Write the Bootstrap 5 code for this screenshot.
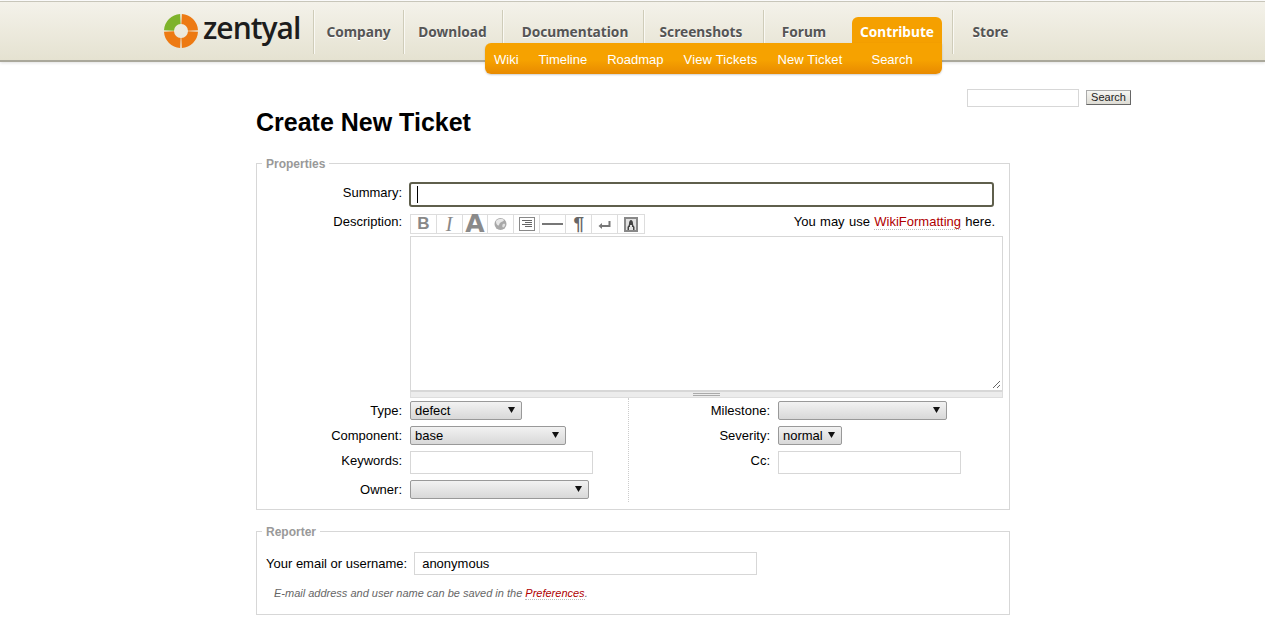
<!DOCTYPE html>
<html lang="en">
<head>
    <meta charset="UTF-8">
    <meta name="viewport" content="width=device-width, initial-scale=1.0">
    <title>Create New Ticket</title>

    <link href="https://cdn.jsdelivr.net/npm/bootstrap@5.3.0/dist/css/bootstrap.min.css" rel="stylesheet">
    <style>
        body { font-family: "Liberation Sans", Arial, sans-serif; font-size: 13px; line-height: 15px; color: #000; background: #fff; }

        /* header */
        .site-head { position: relative; height: 61px; margin-top: 1px; background: linear-gradient(#f4f2ea, #e5e2d1); border-top: 1px solid #c8c6ba; border-bottom: 2px solid #aaa89b; box-shadow: 0 1px 3px rgba(0,0,0,.12); }
        .head-inner { padding-left: 164px; height: 100%; }
        .logo-box { width: 149px; height: 34px; margin-top: 12px; gap: 5px; }
        .logo-word { font-family: "Open Sans", sans-serif; font-weight: 600; font-size: 30px; line-height: 34px; letter-spacing: -1px; color: #1d1d1d; margin-top: -3px; }
        .main-nav { margin-top: 8px; }
        .main-nav .nav-link { display: block; height: 44px; padding: 12px 0 0; text-align: center; font-family: "Noto Sans", sans-serif; font-weight: 700; font-size: 13.7px; line-height: 20px; color: #555; text-shadow: 0 1px 0 #fff; border-left: 1px solid #cfccb9; box-shadow: inset 1px 0 0 #faf9f4; }
        .main-nav .nw-company { width: 90px; }
        .main-nav .nw-download { width: 99px; padding-right: 1px; }
        .main-nav .nw-docs { width: 141px; padding-left: 4px; }
        .main-nav .nw-shots { width: 120px; padding-right: 5px; }
        .main-nav .nw-forum { width: 89px; padding-right: 8px; }
        .main-nav .nw-store { width: 77px; margin-left: 10px; padding-right: 1px; }
        .main-nav .nw-contrib { width: 90px; height: 28px; margin-top: 7px; padding-top: 5px; color: #fff; text-shadow: none; background: #f5a000; border: 0; box-shadow: none; border-radius: 6px 6px 0 0; }
        .sub-menu { position: absolute; left: 485px; top: 41px; width: 457px; height: 31px; padding-left: 9px; background: linear-gradient(#f6a200 55%, #e88a00); border-radius: 0 0 6px 6px; border-top-left-radius: 6px; box-shadow: 0 1px 2px rgba(0,0,0,.2); gap: 20px; }
        .sub-menu a { color: #fff; text-decoration: none; padding-top: 1px; line-height: 32px; white-space: nowrap; }
        .sub-menu .sub-wide { letter-spacing: .15px; }
        .sub-menu a:last-child { margin-left: 9px; }

        /* page */
        .page-wrap { margin-left: 256px; width: 875px; }
        .search-row { margin-top: 27px; height: 18px; }
        .search-input { width: 112px; height: 18px; border: 1px solid #d7d7d7; background: #fff; padding: 0 2px; }
        .search-btn { width: 45px; height: 15px; margin: 1px 0 0 7px; padding: 0 0 1px; font-size: 11px; line-height: 11px; color: #222; background: linear-gradient(#f6f6f3, #dedcd4); border: 1px solid #aaa; border-right-color: #666; border-bottom-color: #666; border-radius: 0; }
        .page-title { margin: 0; font-family: "Liberation Sans", Arial, sans-serif; font-weight: 700; font-size: 25px; line-height: 30px; height: 30px; color: #000; }

        fieldset.form-box { width: 754px; border: 1px solid #d7d7d7; padding: 0; min-width: 0; }
        .form-box legend { float: none; width: auto; margin: 0 0 0 5px; padding: 2px 4px 0; font-size: 12px; font-weight: 700; line-height: 14px; color: #999; }
        .props-box { margin-top: 18px; }
        .rep-box { margin-top: 13px; }

        .summary-row { position: relative; padding-top: 11px; }
        .desc-row { margin-top: 7px; }
        .field-label { width: 145px; text-align: right; flex: none; margin-right: 8px; }
        .label-summary { padding-top: 3px; }
        .label-input { padding-top: 2px; }
        .col-right .field-label { width: 141px; }
        .col-left { width: 372px; padding-top: 3px; height: 104px; border-right: 1px dotted #ccc; }
        .col-right { width: 372px; padding-top: 3px; }
        .gap-row { gap: 6px; }
        .prop-rows { padding-bottom: 7px; }

        .text-field { height: 23px; width: 183px; border: 1px solid #d7d7d7; background: #fff; padding: 0 7px; font: inherit; outline: 0; }
        .summary-input { display: block; width: 585px; height: 25px; margin-left: -1px; border: 2px solid #5f5f4c; border-radius: 3px; padding: 0 6px; font: inherit; background: #fff; outline: 0; caret-color: transparent; }
        .fake-caret { position: absolute; left: 160px; top: 15px; width: 1px; height: 17px; background: #000; }
        .select-box { appearance: none; -webkit-appearance: none; height: 19px; padding: 0 4px; font: inherit; line-height: 17px; color: #000; border: 1px solid #999; border-radius: 2px; background: url("data:image/svg+xml,%3Csvg xmlns='http://www.w3.org/2000/svg' width='7' height='6'%3E%3Cpath d='M0 0h7L3.5 6z' fill='%23111'/%3E%3C/svg%3E") no-repeat right 6px top 5px, linear-gradient(#f2f2f2, #d8d8d8); outline: 0; }
        .sw-type { width: 112px; }
        .sw-comp { width: 156px; }
        .sw-owner { width: 179px; }
        .sw-mile { width: 169px; }
        .sw-sev { width: 64px; }

        .trac-link { color: #b00000; text-decoration: none; border-bottom: 1px dotted #bbb; }

        /* wiki toolbar */
        .tool-line { width: 585px; height: 22px; }
        .tool-hint { word-spacing: .75px; }
        .wiki-bar { height: 20px; width: 235px; border: 1px solid #ddd; background: #fff; }
        .wiki-btn { width: 26px; height: 18px; border-right: 1px solid #ddd; color: #888; line-height: 18px; text-align: center; }
        .wiki-btn:last-child { border-right: 0; }
        .wiki-btn svg { display: block; }
        .wb-bold { font-size: 17px; font-weight: 700; }
        .wb-ital { font-family: "Liberation Serif", serif; font-style: italic; font-size: 20px; }
        .wb-big { font-family: "DejaVu Sans", sans-serif; font-size: 25px; font-weight: 700; color: #8a8a8a; line-height: 17px; }
        .wb-para { font-size: 19px; font-weight: 700; color: #666; }
        .edit-area { width: 593px; height: 155px; border: 1px solid #d7d7d7; position: relative; background: #fff; }
        .drag-bar { width: 593px; height: 7px; background: #ececec; border: 1px solid #ddd; border-top-color: #d7d7d7; position: relative; }
        .drag-bar span { position: absolute; left: 282px; top: 1px; width: 27px; height: 3px; border-top: 1px solid #aaa; border-bottom: 1px solid #aaa; }
        .resize-corner { position: absolute; right: 1px; bottom: 1px; }

        .reporter-row { padding: 13px 0 0 9px; }
        .reporter-label { margin-right: 7px; }
        .reporter-row .text-field { width: 343px; }
        .hint-note { margin: 11px 0 14px 17px; font-size: 11px; line-height: 14px; font-style: italic; color: #666; }
    </style>
</head>
<body>

    <!-- Site header -->
    <header class="site-head">
        <div class="head-inner d-flex">
            <a href="#" class="logo-box d-flex text-decoration-none">
                <svg width="34" height="34" viewBox="0 0 34 34" class="flex-shrink-0">
                    <g fill="none" stroke-width="10">
                        <path d="M5 16.400A12 12 0 0 1 16.400 5" stroke="#7eb32b"/>
                        <path d="M17.600 5A12 12 0 0 1 29 16.400" stroke="#ed7a13"/>
                        <path d="M29 17.600A12 12 0 0 1 17.600 29" stroke="#ed7a13"/>
                        <path d="M16.400 29A12 12 0 0 1 5 17.600" stroke="#ed7a13"/>
                    </g>
                </svg>
                <span class="logo-word">zentyal</span>
            </a>
            <ul class="nav main-nav flex-nowrap align-items-start">
                <li class="nav-item"><a class="nav-link nw-company" href="#">Company</a></li>
                <li class="nav-item"><a class="nav-link nw-download" href="#">Download</a></li>
                <li class="nav-item"><a class="nav-link nw-docs" href="#">Documentation</a></li>
                <li class="nav-item"><a class="nav-link nw-shots" href="#">Screenshots</a></li>
                <li class="nav-item"><a class="nav-link nw-forum" href="#">Forum</a></li>
                <li class="nav-item"><a class="nav-link nw-contrib" href="#">Contribute</a></li>
                <li class="nav-item"><a class="nav-link nw-store" href="#">Store</a></li>
            </ul>
        </div>
        <div class="sub-menu d-flex">
            <a href="#">Wiki</a>
            <a href="#">Timeline</a>
            <a href="#">Roadmap</a>
            <a href="#" class="sub-wide">View Tickets</a>
            <a href="#" class="sub-wide">New Ticket</a>
            <a href="#">Search</a>
        </div>
    </header>

    <div class="page-wrap">
        <form class="search-row d-flex justify-content-end">
            <input type="text" class="search-input" aria-label="Search">
            <button type="button" class="search-btn">Search</button>
        </form>

        <h1 class="page-title">Create New Ticket</h1>

        <fieldset class="form-box props-box">
            <legend>Properties</legend>

            <div class="d-flex summary-row">
                <label class="field-label label-summary">Summary:</label>
                <input type="text" class="summary-input" autofocus>
                <span class="fake-caret"></span>
            </div>

            <div class="d-flex desc-row">
                <label class="field-label">Description:</label>
                <div>
                    <div class="d-flex justify-content-between tool-line">
                        <div class="wiki-bar d-flex">
                            <div class="wiki-btn wb-bold">B</div>
                            <div class="wiki-btn wb-ital">I</div>
                            <div class="wiki-btn wb-big">A</div>
                            <div class="wiki-btn">
                                <svg width="25" height="18" viewBox="0 0 25 18"><circle cx="12.500" cy="9" r="6" fill="#a8a8a8"/><path d="M8 6c2-2.500 6-3 7.500-1.500s-1.500 2-3 3-1 3.500-2.500 3-2-2.500-2-4.500z" fill="#e8e8e8"/><path d="M15 9c1.500-.5 2.500 0 2 1.500s-2 2.500-2.500 1.500 0-2.500.5-3z" fill="#e0e0e0"/></svg>
                            </div>
                            <div class="wiki-btn">
                                <svg width="25" height="18" viewBox="0 0 25 18" fill="none" stroke="#666"><rect x="5.500" y="2.500" width="15" height="13" stroke="#888"/><path d="M8 5.500h10M11 7.500h7M8 9.500h10M11 11.500h7"/></svg>
                            </div>
                            <div class="wiki-btn">
                                <svg width="25" height="18" viewBox="0 0 25 18"><path d="M2 9h21" stroke="#777" stroke-width="2"/></svg>
                            </div>
                            <div class="wiki-btn wb-para">¶</div>
                            <div class="wiki-btn">
                                <svg width="25" height="18" viewBox="0 0 25 18" fill="none"><path d="M17.500 6v5h-8" stroke="#777" stroke-width="2"/><path d="M10 8v6l-3.500-3z" fill="#777"/></svg>
                            </div>
                            <div class="wiki-btn">
                                <svg width="25" height="18" viewBox="0 0 25 18"><rect x="6" y="2" width="14" height="15" fill="#888"/><rect x="8" y="4" width="10" height="11" fill="#e2e2e2"/><path d="M9.500 15v-3c.5-1 1.500-1.500 1.500-3.500S12 5 13 5s2 1.500 2 3.500 1 2.500 1.500 3.500v3h-1.500v-3h-1v-2h-2v2h-1v3z" fill="#444"/></svg>
                            </div>
                        </div>
                        <div class="tool-hint">You may use <a href="#" class="trac-link">WikiFormatting</a> here.</div>
                    </div>
                    <div class="edit-area">
                        <svg class="resize-corner" width="9" height="9" viewBox="0 0 9 9" stroke="#666"><path d="M1 8L8 1M5 8l3-3"/></svg>
                    </div>
                    <div class="drag-bar"><span></span></div>
                </div>
            </div>

            <div class="d-flex prop-rows">
                <div class="col-left d-flex flex-column gap-row">
                    <div class="d-flex align-items-center">
                        <label class="field-label">Type:</label>
                        <select class="select-box sw-type"><option>defect</option></select>
                    </div>
                    <div class="d-flex align-items-center">
                        <label class="field-label">Component:</label>
                        <select class="select-box sw-comp"><option>base</option></select>
                    </div>
                    <div class="d-flex align-items-start">
                        <label class="field-label label-input">Keywords:</label>
                        <input type="text" class="text-field">
                    </div>
                    <div class="d-flex align-items-center">
                        <label class="field-label">Owner:</label>
                        <select class="select-box sw-owner"><option></option></select>
                    </div>
                </div>
                <div class="col-right d-flex flex-column gap-row">
                    <div class="d-flex align-items-center">
                        <label class="field-label">Milestone:</label>
                        <select class="select-box sw-mile"><option></option></select>
                    </div>
                    <div class="d-flex align-items-center">
                        <label class="field-label">Severity:</label>
                        <select class="select-box sw-sev"><option>normal</option></select>
                    </div>
                    <div class="d-flex align-items-start">
                        <label class="field-label label-input">Cc:</label>
                        <input type="text" class="text-field">
                    </div>
                </div>
            </div>
        </fieldset>

        <fieldset class="form-box rep-box">
            <legend>Reporter</legend>
            <div class="d-flex align-items-center reporter-row">
                <label class="reporter-label">Your email or username:</label>
                <input type="text" class="text-field" value="anonymous">
            </div>
            <p class="hint-note">E-mail address and user name can be saved in the <a href="#" class="trac-link">Preferences</a>.</p>
        </fieldset>
    </div>

    <script src="https://cdn.jsdelivr.net/npm/bootstrap@5.3.0/dist/js/bootstrap.bundle.min.js"></script>
</body>
</html>
